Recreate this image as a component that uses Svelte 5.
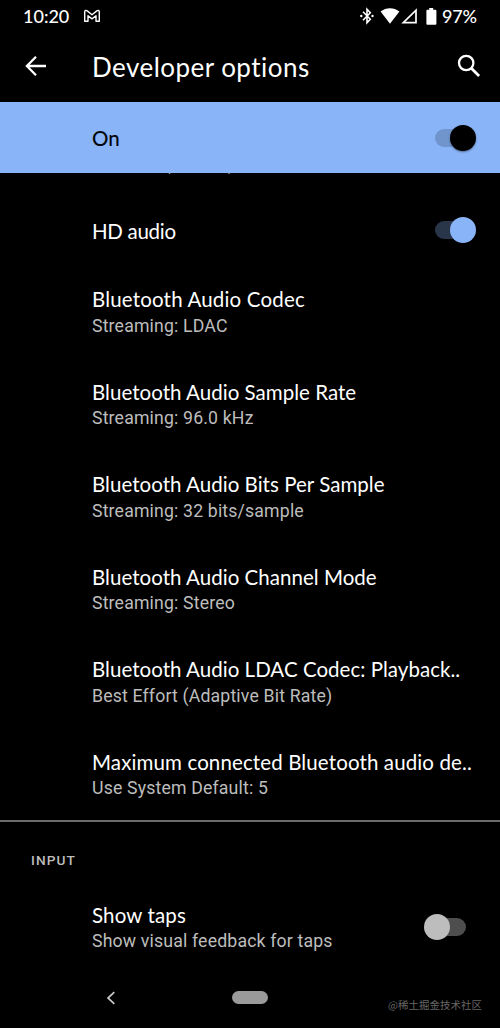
<script>
  const rows = [
    { title: 'Bluetooth Audio Codec', sub: 'Streaming: LDAC', spacing: 0.17 },
    { title: 'Bluetooth Audio Sample Rate', sub: 'Streaming: 96.0 kHz', spacing: 0.03 },
    { title: 'Bluetooth Audio Bits Per Sample', sub: 'Streaming: 32 bits/sample', spacing: 0.03 },
    { title: 'Bluetooth Audio Channel Mode', sub: 'Streaming: Stereo', spacing: 0.03 },
    { title: 'Bluetooth Audio LDAC Codec: Playback..', sub: 'Best Effort (Adaptive Bit Rate)', spacing: 0.03 },
    { title: 'Maximum connected Bluetooth audio de..', sub: 'Use System Default: 5', spacing: 0.12 }
  ];
</script>

<div class="screen">
  <header class="status">
    <span class="time">10:20</span>
    <svg class="mail" width="18" height="14" viewBox="0 0 18 14">
      <path d="M1.700 3C1.700 1.400 3 1 4.200 1.900L9 5.700l4.800-3.800c1.200-.9 2.500-.5 2.500 1.100V12.300h-3.300V6.700L9 9.900 5 6.700v5.600H1.700z" fill="none" stroke="#fff" stroke-width="1.400" stroke-linejoin="round" />
    </svg>
    <span class="grow"></span>
    <svg class="bt" width="14" height="18" viewBox="0 0 14 18">
      <path d="M3 4.700l7.300 7.600L7 15.800V2.200l3.300 3.500L3 13.300" fill="none" stroke="#fff" stroke-width="1.600" />
      <circle cx="1.300" cy="9" r="1.200" fill="#fff" /><circle cx="12.500" cy="9" r="1.200" fill="#fff" />
    </svg>
    <svg class="wifi" width="20" height="16" viewBox="0 0 20 16">
      <path d="M.6 3.600C6-1 14-1 19.400 3.600L10 15.800z" fill="#fff" />
    </svg>
    <svg class="cell" width="17" height="16" viewBox="0 0 17 16">
      <path d="M15 2.200v12.400H2.300z" fill="none" stroke="#fff" stroke-width="1.700" />
    </svg>
    <svg class="battery" width="11" height="17" viewBox="0 0 11 17">
      <path d="M3.200 0h4v1.800h2.200q1 0 1 1v13q0 1-1 1H1.400q-1 0-1-1v-13q0-1 1-1h1.800z" fill="#fff" />
    </svg>
    <span class="percent">97%</span>
  </header>

  <div class="appbar">
    <svg width="22" height="22" viewBox="0 0 22 22">
      <path d="M21 11H2.500M11 1.800L1.900 11l9.100 9.200" fill="none" stroke="#fff" stroke-width="2.300" />
    </svg>
    <h1>Developer options</h1>
    <svg width="24" height="24" viewBox="0 0 24 24">
      <circle cx="9.200" cy="9" r="7.200" fill="none" stroke="#fff" stroke-width="2.300" />
      <path d="M14.300 14.200l7.800 7.700" stroke="#fff" stroke-width="2.800" />
    </svg>
  </div>

  <div class="banner">
    <span>On</span>
    <div class="switch master"><i></i><b></b></div>
  </div>

  <main>
    <div class="previous">MAP 1.2 (Default)</div>
    <div class="single">
      <span class="title">HD audio</span>
      <div class="switch on"><i></i><b></b></div>
    </div>
    {#each rows as row}
      <div class="row">
        <div class="title" style="letter-spacing: {row.spacing}px">{row.title}</div>
        <div class="sub">{row.sub}</div>
      </div>
    {/each}
    <section>
      <h2>INPUT</h2>
      <div class="taps">
        <div>
          <div class="title wide">Show taps</div>
          <div class="sub">Show visual feedback for taps</div>
        </div>
        <div class="switch off"><i></i><b></b></div>
      </div>
    </section>
  </main>

  <nav>
    <svg width="10" height="14" viewBox="0 0 10 14">
      <path d="M8.300 1.200L2 7l6.300 5.800" fill="none" stroke="#c8c8c8" stroke-width="1.700" />
    </svg>
    <span class="home"></span>
    <span class="credit">@稀土掘金技术社区</span>
  </nav>
</div>

<style>
  :global(body) { background: #000; }
  .screen {
    width: 500px;
    height: 1028px;
    display: flex;
    flex-direction: column;
    overflow: hidden;
    background: #000;
    color: #fff;
    font-family: Lato, sans-serif;
    font-variant-ligatures: none;
  }
  svg { display: block; flex: none; }
  .status {
    height: 32px;
    flex: none;
    display: flex;
    align-items: center;
    padding: 0 24px 0 23px;
    font-size: 18px;
    line-height: 32px;
    font-weight: 500;
  }
  .time { width: 60px; }
  .grow { flex: 1; }
  .wifi { margin-left: 6px; }
  .cell { margin-left: 1px; }
  .battery { margin-left: 8px; }
  .percent { width: 34px; margin-left: 5px; white-space: nowrap; letter-spacing: -.2px; }
  .appbar {
    height: 70px;
    flex: none;
    box-sizing: border-box;
    display: flex;
    align-items: center;
    padding: 0 19px 2px 25px;
  }
  h1 {
    flex: 1;
    margin: 0 0 0 45px;
    padding-top: 2px;
    font-size: 26px;
    line-height: 32px;
    font-weight: 400;
    letter-spacing: .46px;
  }
  .banner {
    height: 71px;
    flex: none;
    display: flex;
    align-items: center;
    justify-content: space-between;
    padding: 0 24px 0 92px;
    background: #8ab4f8;
    color: #05080e;
    font-size: 20.500px;
    font-weight: 500;
  }
  .switch { display: grid; width: 42px; height: 26px; align-items: center; }
  .switch i, .switch b { grid-area: 1 / 1; }
  .switch i { width: 36px; height: 18px; border-radius: 9px; margin-left: 1px; }
  .switch b { width: 26px; height: 26px; border-radius: 50%; justify-self: end; }
  .single .switch { margin-top: -2px; }
  .master i { background: #7095cc; }
  .master b { background: #000; box-shadow: 0 1px 2px #0006; }
  .on i { background: #293548; }
  .on b { background: #8ab4f8; }
  .off i { background: #4e4e4e; justify-self: end; }
  .off b { background: #bdbdbd; justify-self: start; }
  main { flex: none; height: 793px; overflow: hidden; display: flex; flex-direction: column; }
  .previous {
    height: 22px;
    margin-top: -20px;
    padding-left: 92px;
    flex: none;
    font: 17.500px/22px Roboto, sans-serif;
    letter-spacing: .2px;
    color: #bdbdbd;
  }
  .single {
    height: 111px;
    flex: none;
    box-sizing: border-box;
    display: flex;
    align-items: center;
    justify-content: space-between;
    padding: 1px 24px 0 92px;
  }
  .single .title { letter-spacing: -.3px; }
  .title { font-size: 20.500px; line-height: 26px; white-space: nowrap; }
  .wide { letter-spacing: .15px; }
  .sub { padding-top: 1.500px; font: 17.700px/25px Roboto, sans-serif; letter-spacing: .16px; color: #bdbdbd; white-space: nowrap; }
  .row { height: 92.600px; flex: none; padding-left: 92px; box-sizing: border-box; }
  section { border-top: 2px solid #6c6c6c; margin-top: -22px; }
  h2 { margin: 0; padding: 28px 0 0 31px; font: 500 13.700px/20px Roboto, sans-serif; letter-spacing: 1.050px; color: #bdbdbd; }
  .taps { display: flex; justify-content: space-between; align-items: center; padding: 32px 34px 0 92px; }
  .taps .switch { margin-top: -1px; }
  nav { flex: 1; display: flex; align-items: center; padding: 1px 18px 0 106px; }
  .home { width: 36px; height: 13px; border-radius: 7px; background: #9a9a9a; margin-left: 116px; }
  .credit { margin-left: auto; padding-top: 14px; font: 10.500px/16px "Noto Sans CJK SC", sans-serif; color: #666; white-space: nowrap; }
</style>
